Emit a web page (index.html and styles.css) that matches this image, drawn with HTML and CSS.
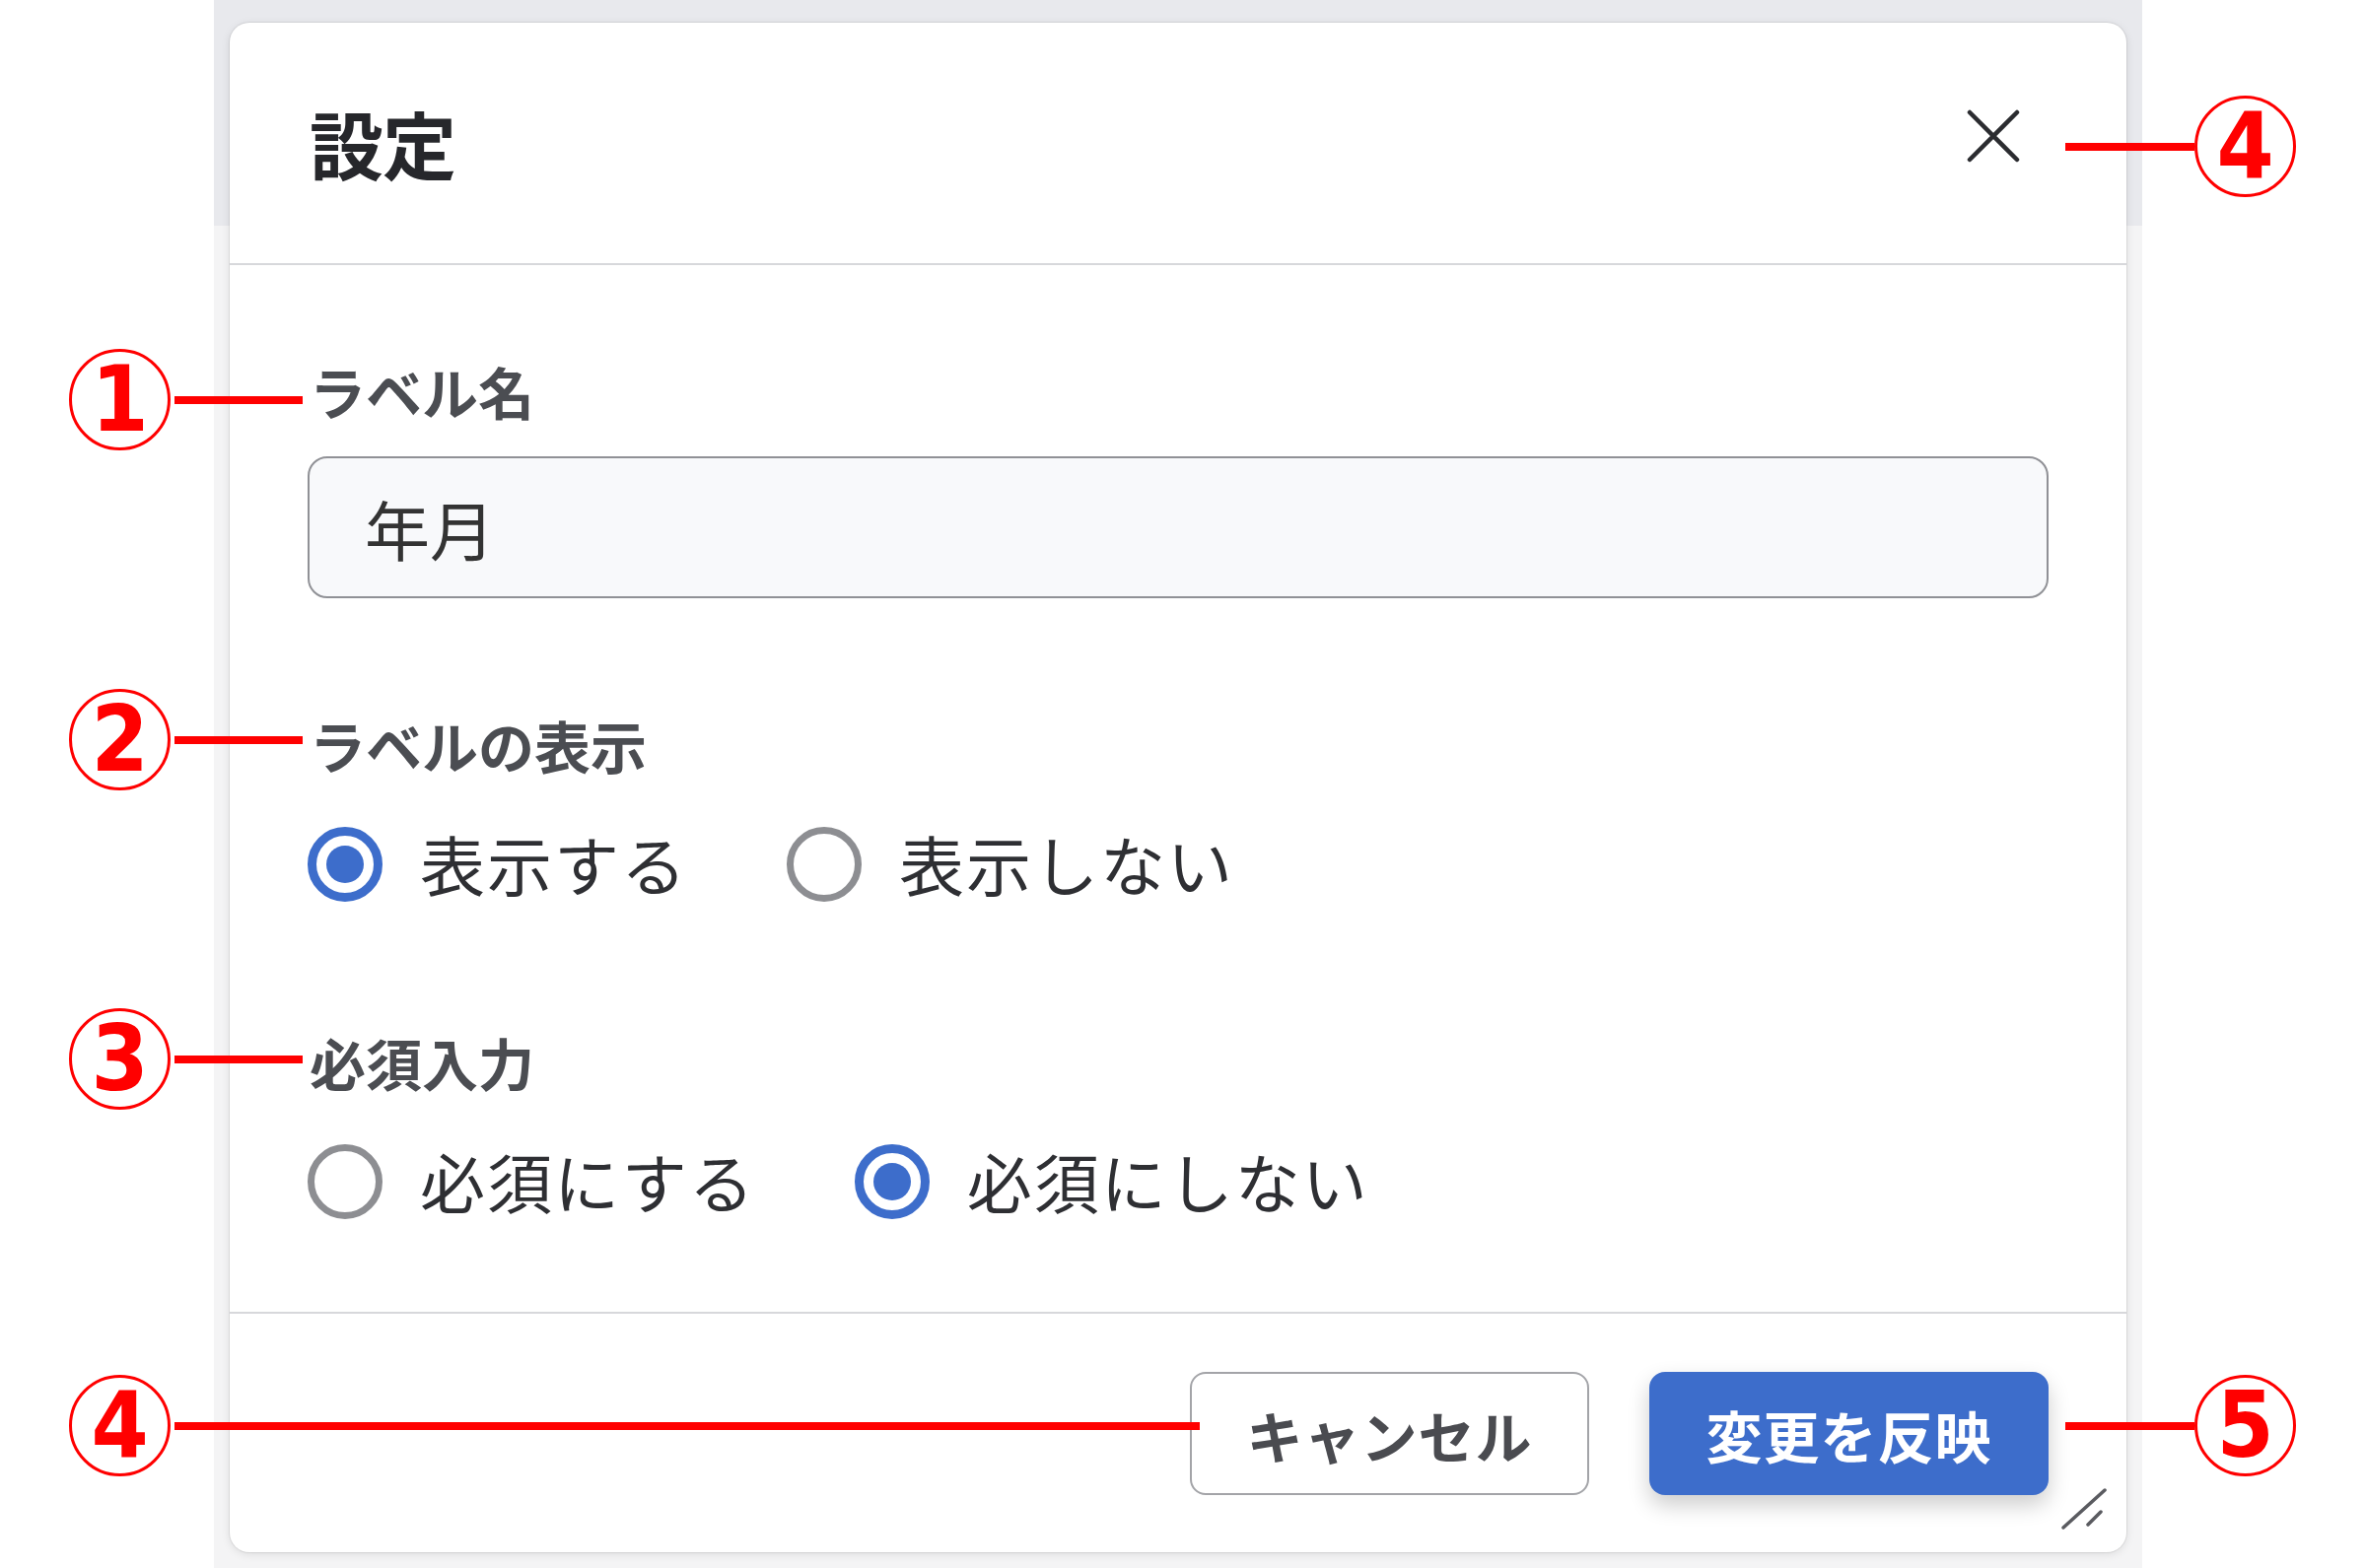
FILE: index.html
```html
<!DOCTYPE html>
<html lang="ja">
<head>
<meta charset="utf-8">
<title>設定</title>
<link rel="stylesheet" href="styles.css">
</head>
<body>
<div class="page">
  <div class="gutter"></div>
  <div class="stage">
    <div class="dialog">
      <div class="dlg-head">
        <h1 class="dlg-title">設定</h1>
        <button class="close-btn" aria-label="閉じる">
          <svg width="56" height="56" viewBox="0 0 56 56"><path d="M4 4 L52 52 M52 4 L4 52" stroke="#2b2c30" stroke-width="4.5" stroke-linecap="round" fill="none"/></svg>
        </button>
      </div>
      <div class="dlg-body">
        <div class="field">
          <div class="field-label">ラベル名</div>
          <input class="text-input" type="text" value="年月">
        </div>
        <div class="field field-gap">
          <div class="field-label">ラベルの表示</div>
          <div class="radio-group">
            <label class="radio-opt"><span class="radio checked"></span><span class="radio-text">表示する</span></label>
            <label class="radio-opt"><span class="radio"></span><span class="radio-text">表示しない</span></label>
          </div>
        </div>
        <div class="field field-gap2">
          <div class="field-label">必須入力</div>
          <div class="radio-group">
            <label class="radio-opt"><span class="radio"></span><span class="radio-text">必須にする</span></label>
            <label class="radio-opt"><span class="radio checked"></span><span class="radio-text">必須にしない</span></label>
          </div>
        </div>
      </div>
      <div class="dlg-foot">
        <button class="btn btn-cancel">キャンセル</button>
        <button class="btn btn-apply">変更を反映</button>
      </div>
      <svg class="resize" width="46" height="42" viewBox="0 0 46 42"><path d="M2 40 L44 2 M27 37 L40 24" stroke="#5a5b60" stroke-width="3.5" stroke-linecap="round" fill="none"/></svg>
    </div>
  </div>

  <div class="callout c1"><span class="num">1</span><span class="line short"></span></div>
  <div class="callout c2"><span class="num">2</span><span class="line short"></span></div>
  <div class="callout c3"><span class="num">3</span><span class="line short"></span></div>
  <div class="callout c4b"><span class="num">4</span><span class="line long"></span></div>
  <div class="callout c4t"><span class="line right"></span><span class="num">4</span></div>
  <div class="callout c5"><span class="line right"></span><span class="num">5</span></div>
</div>
</body>
</html>
```

FILE: styles.css
```css
html, body {
  margin: 0;
  padding: 0;
  background: #ffffff;
}

body {
  font-family: "Noto Sans CJK JP", "Noto Sans", sans-serif;
  color: #333;
}

.page {
  position: relative;
  display: flex;
  width: 2399px;
  height: 1591px;
  overflow: hidden;
}

.gutter {
  width: 217px;
  flex: none;
}

.stage {
  width: 1956px;
  height: 1591px;
  box-sizing: border-box;
  padding: 23px 16px 0 16px;
  background: linear-gradient(to bottom, #e8e9ed 0, #e8e9ed 229px, #f4f4f5 229px, #f4f4f5 100%);
}

.dialog {
  position: relative;
  width: 1924px;
  height: 1552px;
  background: #fff;
  border-radius: 20px;
  box-shadow: 0 0 0 1px rgba(0, 0, 0, 0.07), 0 2px 10px rgba(0, 0, 0, 0.10);
  display: flex;
  flex-direction: column;
}

.dlg-head {
  height: 244px;
  flex: none;
  display: flex;
  align-items: center;
  justify-content: space-between;
  padding: 0 107px 0 81px;
  border-bottom: 2px solid #d7d8db;
}

.dlg-title {
  margin: 0;
  font-size: 75px;
  font-weight: 700;
  color: #26272b;
  line-height: 1.2;
  letter-spacing: -1px;
}

.close-btn {
  width: 56px;
  height: 56px;
  padding: 0;
  border: none;
  background: none;
  display: flex;
  margin-top: -14px;
}

.dlg-body {
  flex: 1;
  padding: 93px 79px 0 79px;
}

.field {
  display: flex;
  flex-direction: column;
}

.field-gap {
  margin-top: 114px;
}

.field-gap2 {
  margin-top: 128px;
}

.field-label {
  font-size: 57px;
  line-height: 68px;
  font-weight: 700;
  color: #4b4d52;
  padding-left: 2px;
}

.text-input {
  margin-top: 33px;
  height: 144px;
  box-sizing: border-box;
  border: 2px solid #909196;
  border-radius: 20px;
  background: #f8f9fb;
  padding: 0 0 0 56px;
  font-family: "Noto Sans CJK JP", sans-serif;
  font-size: 66px;
  color: #333;
  outline: none;
}

.radio-group {
  margin-top: 50px;
  display: flex;
  align-items: center;
  gap: 100px;
  height: 76px;
}

.radio-opt {
  display: flex;
  align-items: center;
  gap: 38px;
}

.radio {
  width: 76px;
  height: 76px;
  box-sizing: border-box;
  border: 7px solid #8d8e92;
  border-radius: 50%;
  display: flex;
  align-items: center;
  justify-content: center;
  flex: none;
}

.radio.checked {
  border: 9px solid #3d6dcb;
}

.radio.checked::after {
  content: "";
  width: 38px;
  height: 38px;
  border-radius: 50%;
  background: #3d6dcb;
}

.radio-text {
  font-size: 66px;
  line-height: 76px;
  color: #2e2f33;
  letter-spacing: 2px;
  margin-top: -4px;
}

.dlg-foot {
  flex: none;
  border-top: 2px solid #d7d8db;
  padding: 59px 79px 58px 0;
  display: flex;
  justify-content: flex-end;
  gap: 61px;
}

.btn {
  width: 405px;
  height: 125px;
  box-sizing: border-box;
  border-radius: 16px;
  font-family: "Noto Sans CJK JP", sans-serif;
  font-size: 57px;
  font-weight: 700;
  letter-spacing: 1px;
  padding: 0;
}

.btn-cancel {
  background: #fff;
  border: 2px solid #a3a4a8;
  color: #4a4b50;
}

.btn-apply {
  background: #3d6dcb;
  border: none;
  color: #fff;
  box-shadow: 0 10px 22px rgba(0, 0, 0, 0.20);
}

.resize {
  position: absolute;
  right: 20px;
  bottom: 23px;
}

/* callouts (annotations over the screenshot) */
.callout {
  position: absolute;
  display: flex;
  align-items: center;
}

.num {
  width: 103px;
  height: 103px;
  box-sizing: border-box;
  border: 3px solid #ff0000;
  border-radius: 50%;
  display: flex;
  align-items: center;
  justify-content: center;
  color: #ff0000;
  font-family: "DejaVu Sans Condensed", "DejaVu Sans", sans-serif;
  font-weight: 700;
  font-size: 93px;
  line-height: 1;
  flex: none;
}

.line {
  height: 8px;
  background: #ff0000;
  flex: none;
}

.line.short {
  width: 130px;
  margin-left: 4px;
}

.line.long {
  width: 1040px;
  margin-left: 4px;
}

.line.right {
  width: 131px;
}

.c1 { left: 70px; top: 354px; }
.c2 { left: 70px; top: 699px; }
.c3 { left: 70px; top: 1023px; }
.c4b { left: 70px; top: 1395px; }
.c4t { left: 2095px; top: 97px; }
.c5 { left: 2095px; top: 1395px; }
```
